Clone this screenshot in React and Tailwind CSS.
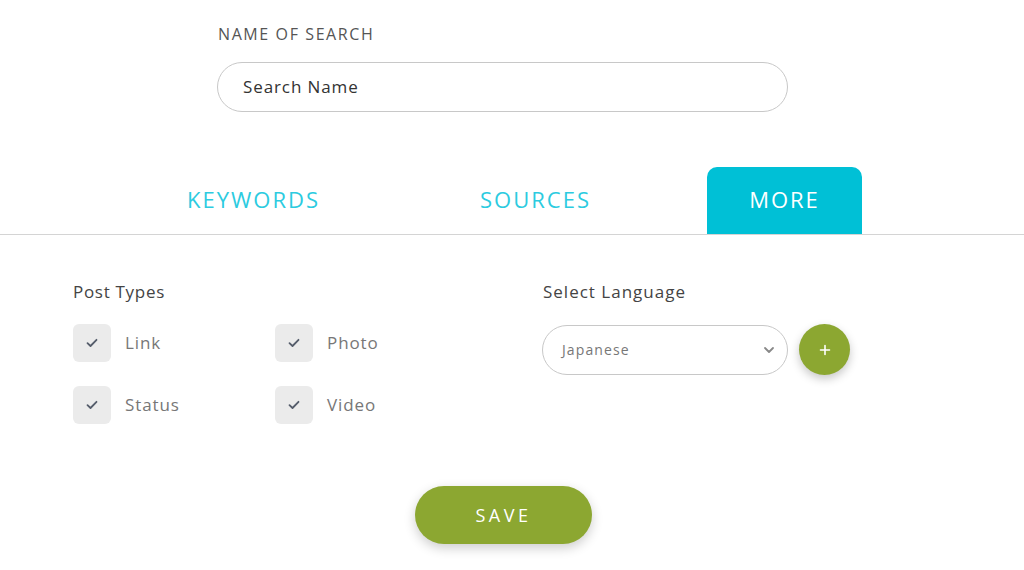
import React from "react";

function Check() {
  return (
    <svg width="12" height="10" viewBox="0 0 12 10" fill="none">
      <path d="M1.5 5.2 L4.5 8 L10.5 1.8" stroke="#555d6b" strokeWidth="1.8" strokeLinecap="round" strokeLinejoin="round" />
    </svg>
  );
}

function Box({ label }) {
  return (
    <div className="flex items-center w-[202px]">
      <div className="w-[38px] h-[38px] rounded-[6px] bg-[#ebebeb] flex items-center justify-center">
        <Check />
      </div>
      <span className="ml-[14px] text-[17px] text-[#777] tracking-[0.9px]">{label}</span>
    </div>
  );
}

export default function App() {
  return (
    <div className="w-full h-[570px] bg-white overflow-hidden" style={{ fontFamily: '"Open Sans", "Liberation Sans", sans-serif' }}>
      <div className="pl-[217px] pt-[24px]">
        <div className="pl-[1px] text-[16px] leading-[20px] text-[#555] tracking-[1.6px]">NAME OF SEARCH</div>
        <div className="mt-[18px] w-[571px] h-[50px] rounded-full border border-[#c8c8c8] flex items-center pl-[25px] text-[17px] text-[#333] tracking-[0.9px]">
          Search Name
        </div>
      </div>

      <div className="mt-[55px] flex h-[68px] border-b border-[#d4d4d4] pl-[176px]">
        <div className="w-[155px] flex items-center justify-center pb-[3px] text-[22px] tracking-[2px] text-[#2ccbe0]">KEYWORDS</div>
        <div className="ml-[127px] w-[155px] flex items-center justify-center pb-[3px] text-[22px] tracking-[2px] text-[#2ccbe0]">SOURCES</div>
        <div className="ml-[94px] w-[155px] flex items-center justify-center pb-[3px] text-[22px] tracking-[2px] text-white bg-[#00c0d6] rounded-t-[10px]">MORE</div>
      </div>

      <div className="flex pt-[45px]">
        <div className="pl-[73px] w-[542px]">
          <div className="text-[17px] leading-[24px] text-[#444] tracking-[0.7px]">Post Types</div>
          <div className="mt-[20px] flex">
            <Box label="Link" />
            <Box label="Photo" />
          </div>
          <div className="mt-[24px] flex">
            <Box label="Status" />
            <Box label="Video" />
          </div>
        </div>
        <div>
          <div className="pl-[1px] text-[17px] leading-[24px] text-[#444] tracking-[1px]">Select Language</div>
          <div className="mt-[20px] flex items-center">
            <div className="w-[246px] h-[50px] rounded-full border border-[#c8c8c8] flex items-center justify-between pl-[19px] pr-[12px] text-[14px] text-[#777] tracking-[1.1px]">
              <span>Japanese</span>
              <svg width="12" height="8" viewBox="0 0 12 8" fill="none">
                <path d="M2 2 L6 6 L10 2" stroke="#888" strokeWidth="1.8" strokeLinecap="round" strokeLinejoin="round" />
              </svg>
            </div>
            <div className="ml-[11px] w-[51px] h-[51px] rounded-full bg-[#8ca731] flex items-center justify-center shadow-[0_4px_10px_rgba(0,0,0,0.22)]">
              <svg width="12" height="12" viewBox="0 0 12 12" fill="none">
                <path d="M6 1.5 V10.5 M1.5 6 H10.5" stroke="white" strokeWidth="1.6" strokeLinecap="round" />
              </svg>
            </div>
          </div>
        </div>
      </div>

      <div className="flex justify-center mt-[62px] pr-[17px]">
        <div className="w-[177px] h-[58px] rounded-full bg-[#8ca731] flex items-center justify-center text-white text-[18px] tracking-[3.5px] shadow-[0_4px_12px_rgba(0,0,0,0.2)]">
          SAVE
        </div>
      </div>
    </div>
  );
}
